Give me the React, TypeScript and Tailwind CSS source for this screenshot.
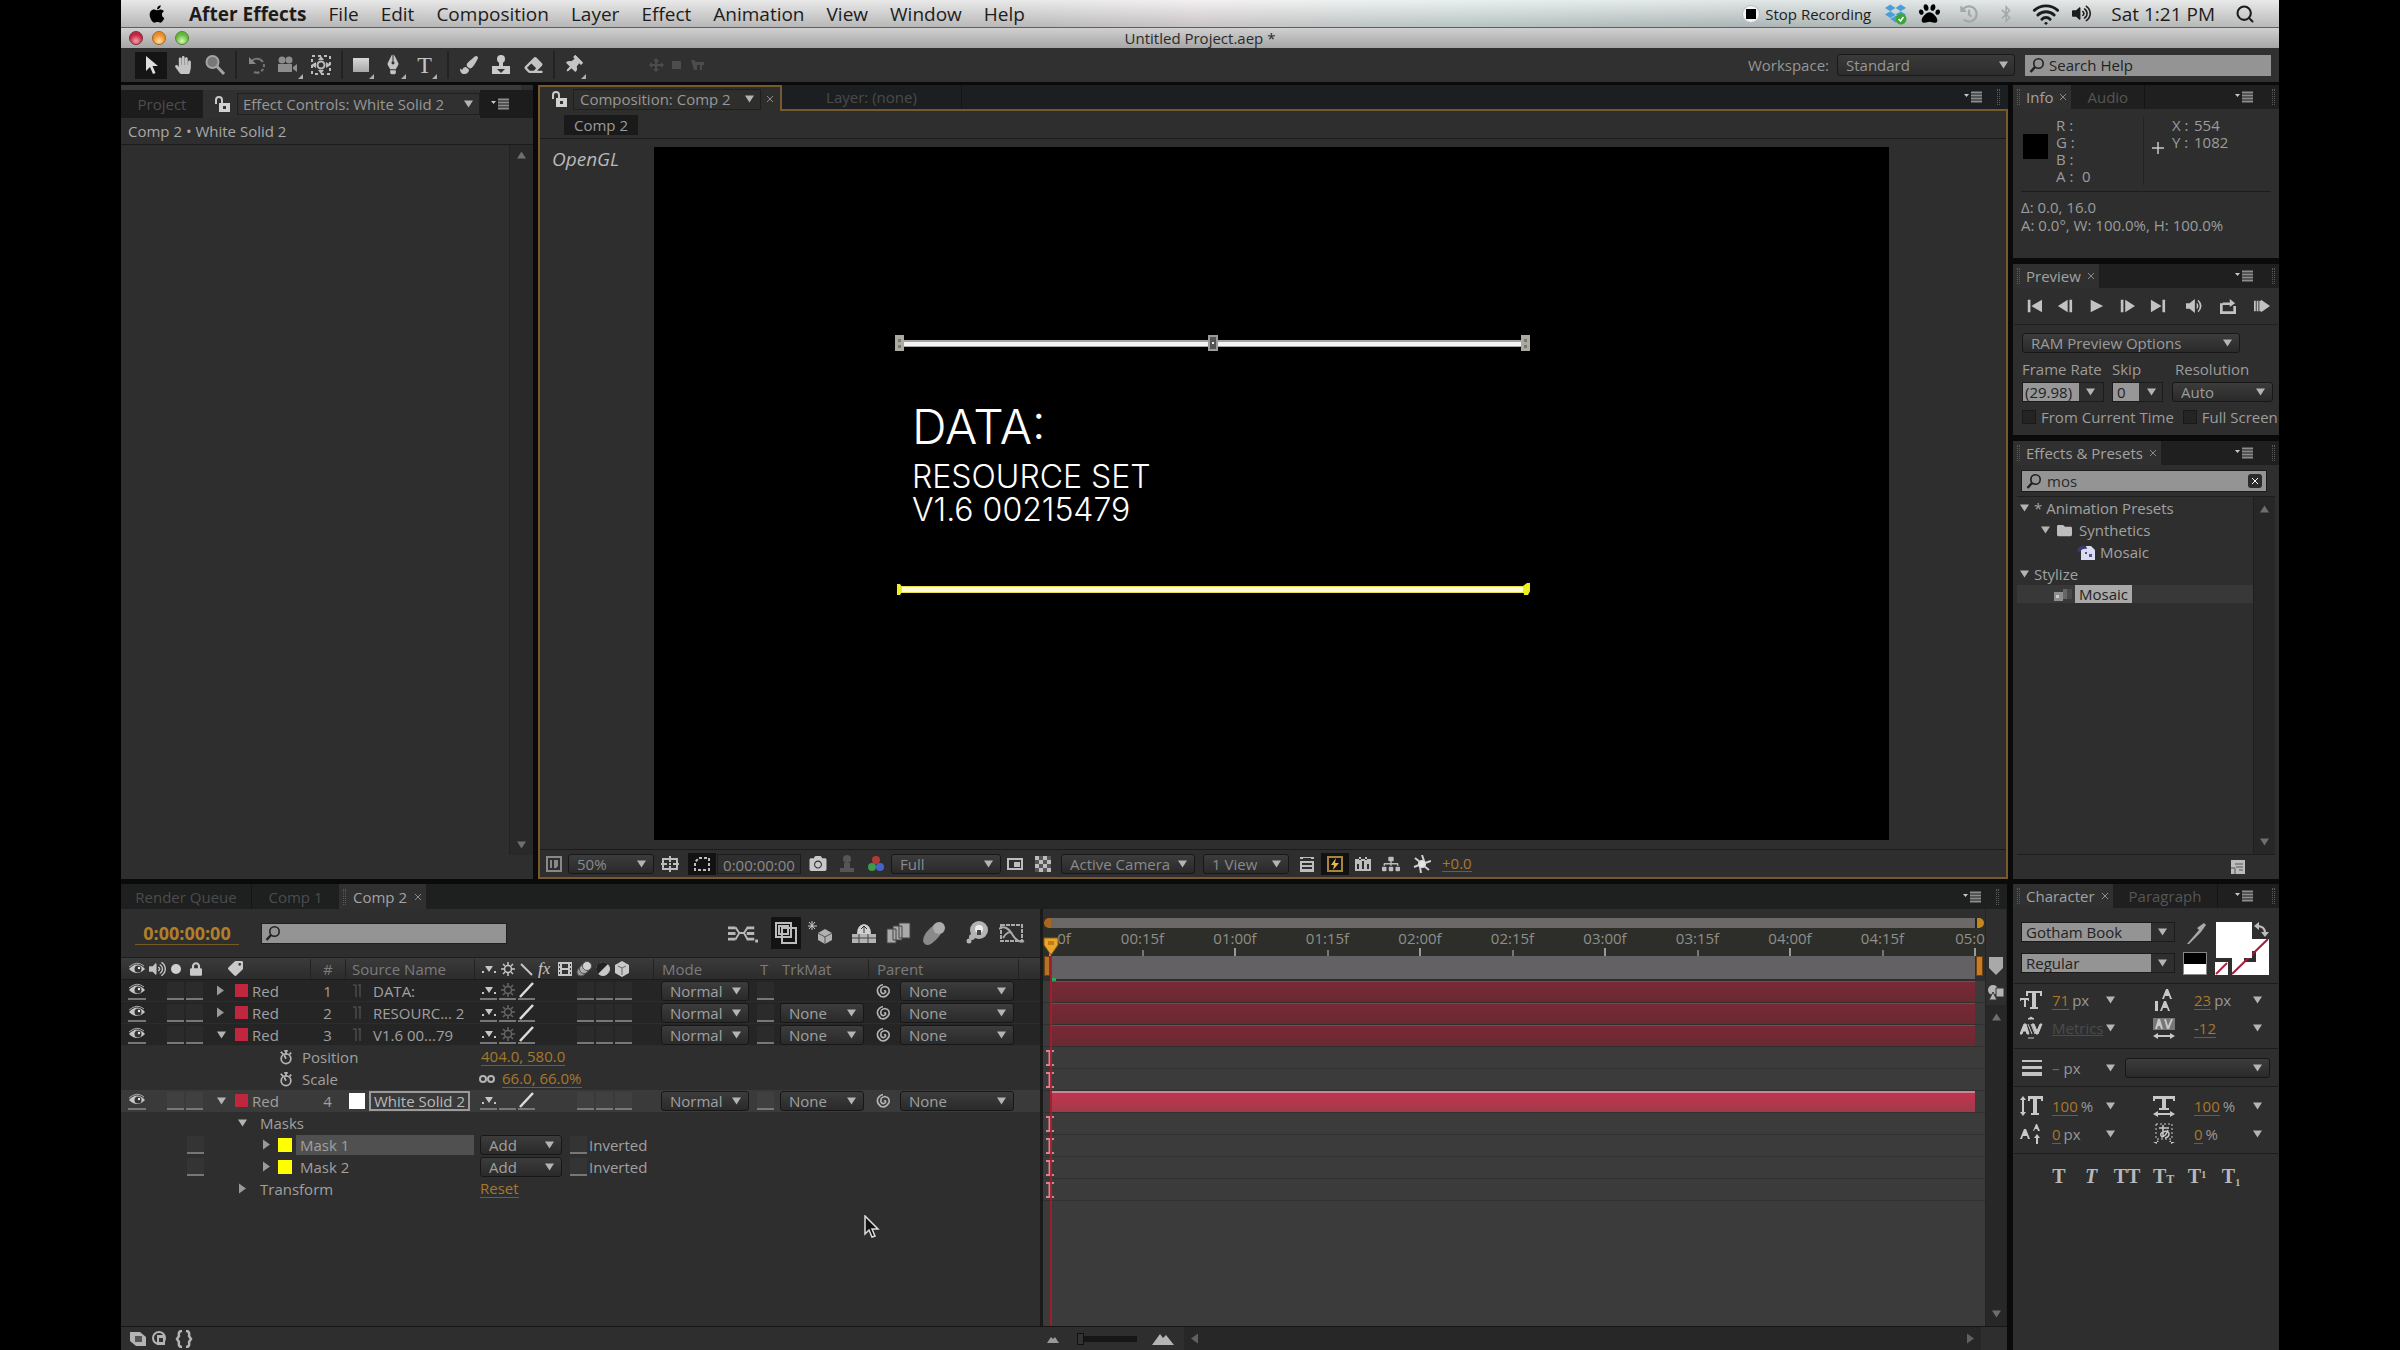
import React from 'react';
import {
  FaApple, FaBluetoothB, FaCamera, FaDropbox, FaEraser, FaFolder, FaHandPaper, FaHistory, FaLock,
  FaPaintBrush, FaPaw, FaPenNib, FaSitemap, FaTag, FaThumbtack, FaVolumeUp,
} from 'react-icons/fa';
import { Search, Wifi } from 'lucide-react';

type IconProps = { className?: string };

/* ---------- Small shared pieces ---------- */

const Down = ({ className = '' }: IconProps) => (
  <svg viewBox="0 0 10 8" className={`w-[9px] h-2 shrink-0 fill-[#b4b4b4] ${className}`}>
    <path d="M0 0h10L5 8z" />
  </svg>
);

const Right = ({ className = '' }: IconProps) => (
  <svg viewBox="0 0 8 10" className={`w-2 h-[11px] shrink-0 fill-[#9a9a9a] ${className}`}>
    <path d="M0 0v10l7-5z" />
  </svg>
);

const Close = ({ className = '' }: IconProps) => (
  <svg viewBox="0 0 8 8" className={`w-2 h-2 shrink-0 stroke-[#8a8a8a] ${className}`}>
    <path d="M1 1l6 6M7 1L1 7" />
  </svg>
);

const MenuButton = () => (
  <button aria-label="Panel menu" className="flex items-center justify-center w-10 h-full shrink-0">
    <svg viewBox="0 0 18 12" className="w-[18px] h-3">
      <path d="M0 3h5L2.500 6z" fill="#c8c8c8" />
      <path d="M7 1.500h11M7 4.500h11M7 7.500h11M7 10.500h11" stroke="#8c8c8c" strokeWidth="2" />
    </svg>
  </button>
);

const Grip = () => <span className="w-[3px] h-4 shrink-0 border-x border-dotted border-[#5a5a5a]" />;

const Magnifier = () => (
  <svg viewBox="0 0 16 16" className="w-4 h-4 shrink-0" fill="none" stroke="#222" strokeWidth="1.600">
    <circle cx="9.500" cy="6.500" r="4.700" />
    <path d="M6 10L1.500 15" strokeWidth="2.400" />
  </svg>
);

const OpenLock = () => (
  <svg viewBox="0 0 18 18" className="w-[18px] h-[18px] shrink-0">
    <path d="M3 9V5a3 3 0 0 1 6 0v4" fill="none" stroke="#c9c9c9" strokeWidth="2" />
    <path d="M6 8h11v9H6z" fill="#d2d2d2" />
    <path d="M10 11h3v3h-3z" fill="#333" />
  </svg>
);

type PickProps = { label: string; options: string[]; className?: string };

const Pick = ({ label, options, className = '' }: PickProps) => (
  <span className={`grid items-center h-5 shrink-0 rounded-[3px] border border-[#171717] bg-gradient-to-b from-[#3c3c3c] to-[#2a2a2a] ${className}`}>
    <select aria-label={label} className="col-start-1 row-start-1 w-full h-[18px] pl-2 leading-[18px] appearance-none bg-transparent outline-none">
      {options.map((o) => <option key={o}>{o}</option>)}
    </select>
    <Down className="col-start-1 row-start-1 justify-self-end mr-[7px] pointer-events-none" />
  </span>
);

type TabsProps = { active: string; others?: string[] };

const Tabs = ({ active, others = [] }: TabsProps) => (
  <div className="flex h-6 shrink-0 bg-[#1f1f1f]">
    <button className="flex items-center gap-[6px] px-1 bg-[#303030] text-[#a2a2a2] whitespace-nowrap">
      <Grip />
      {active}
      <Close />
    </button>
    {others.map((o) => (
      <button key={o} className="px-4 border-r border-[#141414] text-[#565656] whitespace-nowrap">{o}</button>
    ))}
    <div className="flex items-center gap-2 ml-auto pr-1">
      <MenuButton />
      <Grip />
    </div>
  </div>
);

/* ---------- System bars ---------- */

const menus = ['File', 'Edit', 'Composition', 'Layer', 'Effect', 'Animation', 'View', 'Window', 'Help'];

const MenuBar = () => (
  <header className="flex items-center h-7 shrink-0 pl-[26px] pr-6 border-b border-[#5d5f60] text-[19px] leading-7 text-[#1c1c1c] bg-[linear-gradient(to_bottom,#ffffff88,#77777744),linear-gradient(to_right,#cccccc,#d0d0d0_42%,#e6dfe1_50%,#cfe0de_62%,#bfcccc_75%,#d0d0d0)]">
    <FaApple className="w-5 h-5 mr-[22px] text-black" />
    <nav className="flex gap-[22px] whitespace-nowrap">
      <button className="font-bold">After Effects</button>
      {menus.map((m) => <button key={m}>{m}</button>)}
    </nav>
    <div className="flex items-center ml-auto whitespace-nowrap">
      <span className="flex items-center justify-center w-[18px] h-[18px] rounded-full bg-[#f4f4f4] border border-[#bbb]">
        <span className="w-[10px] h-[10px] bg-black" />
      </span>
      <button className="ml-[5px] text-[15px] font-medium">Stop Recording</button>
      <svg viewBox="0 0 22 22" className="w-[22px] h-[22px] ml-[14px]">
        <FaDropbox size={21} color="#4a9fd8" />
        <circle cx="16" cy="16" r="5.500" fill="#3aa63a" />
        <path d="M13.500 16l2 2 3-4" stroke="#fff" strokeWidth="1.500" fill="none" />
      </svg>
      <FaPaw className="w-[21px] h-[21px] ml-3 text-black" />
      <FaHistory className="w-[18px] h-[18px] ml-5 text-[#a3a9a9]" />
      <FaBluetoothB className="w-4 h-[18px] ml-5 text-[#a3a9a9]" />
      <Wifi className="w-7 h-7 ml-[18px]" strokeWidth={2.500} />
      <FaVolumeUp className="w-[19px] h-[19px] ml-3" />
      <span className="ml-5">Sat 1:21 PM</span>
      <Search className="w-5 h-5 ml-5" strokeWidth={2.500} />
    </div>
  </header>
);

const TitleBar = () => (
  <div className="grid grid-cols-[1fr_auto_1fr] items-center h-5 shrink-0 px-2 bg-gradient-to-b from-[#d0d0d0] to-[#a6a6a6] text-sm leading-5 text-[#2a2a2a]">
    <div className="flex gap-[9px]">
      <button aria-label="Close" className="w-[14px] h-[14px] rounded-full border border-[#7d2a35] bg-[radial-gradient(circle_at_50%_75%,#f6a0ac,#c22740_60%)]" />
      <button aria-label="Minimize" className="w-[14px] h-[14px] rounded-full border border-[#a3661c] bg-[radial-gradient(circle_at_50%_75%,#fbe1a0,#ee8b28_60%)]" />
      <button aria-label="Zoom" className="w-[14px] h-[14px] rounded-full border border-[#4c8630] bg-[radial-gradient(circle_at_50%_75%,#dcf7b8,#64b83e_60%)]" />
    </div>
    <h1 className="text-[15px]">Untitled Project.aep *</h1>
  </div>
);

/* ---------- Tool bar ---------- */

const Arrow = () => (
  <svg viewBox="0 0 16 20" className="w-4 h-5"><path d="M3 1v15l4-4 3 7 2.500-1-3-7H15z" fill="#dedede" /></svg>
);
const Zoomer = () => (
  <svg viewBox="0 0 22 22" className="w-[22px] h-[22px]" fill="#777" stroke="#a4a4a4" strokeWidth="2">
    <circle cx="8.500" cy="8" r="6" /><path d="M13 12.500l7 7.500" strokeWidth="3" />
  </svg>
);
const Rotate = () => (
  <svg viewBox="0 0 20 20" className="w-5 h-5" fill="none" stroke="#777" strokeWidth="2">
    <path d="M4 7a7 7 0 1 1 3 10" strokeDasharray="14 2 3 2 3 2" /><path d="M2 2v7h7z" fill="#888" stroke="none" />
  </svg>
);
const Cameras = () => (
  <svg viewBox="0 0 22 20" className="w-[22px] h-5" fill="#8d8d8d">
    <circle cx="6" cy="5" r="3.500" /><circle cx="13" cy="5" r="3.500" />
    <path d="M2 9h14v8H2zM17 12l4-3v8l-4-3z" />
  </svg>
);
const PanBehind = () => (
  <svg viewBox="0 0 24 22" className="w-6 h-[22px]" stroke="#bcbcbc" fill="none">
    <rect x="3" y="2" width="18" height="18" strokeDasharray="3 3" strokeWidth="2" />
    <circle cx="12" cy="11" r="3.500" strokeWidth="2" />
    <path d="M2 11l5-3v6zM22 11l-5-3v6zM12 2l3 4H9zM12 20l3-4H9z" fill="#bcbcbc" stroke="none" />
  </svg>
);
const Stamp = () => (
  <svg viewBox="0 0 20 20" className="w-5 h-5" fill="#cacaca">
    <circle cx="10" cy="4" r="4" /><path d="M8 7h4v4h7v8H1v-8h7z" /><path d="M6 14h8l-4 4z" fill="#333" />
  </svg>
);

const toolGroups = [
  [
    { name: 'Selection', icon: <Arrow />, on: true },
    { name: 'Hand', icon: <FaHandPaper className="w-[18px] h-[18px]" /> },
    { name: 'Zoom', icon: <Zoomer /> },
  ],
  [
    { name: 'Rotation', icon: <Rotate /> },
    { name: 'Camera', icon: <Cameras />, more: true },
    { name: 'Pan Behind', icon: <PanBehind /> },
  ],
  [
    { name: 'Rectangle', icon: <span className="w-4 h-[14px] bg-gradient-to-b from-[#d8d8d8] to-[#a8a8a8]" />, more: true },
    { name: 'Pen', icon: <FaPenNib className="w-4 h-[18px] rotate-135" />, more: true },
    { name: 'Type', icon: <span className="font-['Liberation_Serif'] text-2xl leading-6">T</span>, more: true },
  ],
  [
    { name: 'Brush', icon: <FaPaintBrush className="w-[18px] h-[18px]" /> },
    { name: 'Clone Stamp', icon: <Stamp /> },
    { name: 'Eraser', icon: <FaEraser className="w-[19px] h-[18px]" /> },
  ],
  [{ name: 'Puppet Pin', icon: <FaThumbtack className="w-4 h-[18px] rotate-45" />, more: true }],
];

const ToolBar = () => (
  <div className="flex items-center h-[34px] shrink-0 pl-[14px] pr-2 bg-[#303030] text-[#c4c4c4]">
    {toolGroups.map((group, i) => (
      <div key={i} className="flex items-center">
        {i > 0 && <span className="w-[2px] h-7 mx-1 bg-[#222]" />}
        {group.map((t) => (
          <button
            key={t.name}
            aria-label={t.name}
            className={`flex items-center justify-center w-8 h-[27px] ${t.on ? 'bg-[#151515]' : ''}`}
          >
            {t.icon}
            {t.more && <svg viewBox="0 0 5 5" className="w-[5px] h-[5px] self-end fill-[#b0b0b0]"><path d="M5 0v5H0z" /></svg>}
          </button>
        ))}
      </div>
    ))}
    <svg viewBox="0 0 56 14" className="w-14 h-[14px] ml-[58px]" fill="#4c4c4c">
      <path d="M7 0l3 3-2 2v1h4V4l3 3-3 3V8H8v3h2l-3 3-3-3h2V8H3v2L0 7l3-3v2h3V3H4zM23 3h9v8h-9zM42 2h3l2 2h8v3h-2v5h-2V7h-3v5h-3z" />
    </svg>
    <label htmlFor="workspace" className="ml-auto mr-2 text-[#969696]">Workspace:</label>
    <span className="grid items-center w-[178px] h-[22px] rounded-[3px] border border-[#191919] bg-gradient-to-b from-[#3a3a3a] to-[#2c2c2c] text-[#969696]">
      <select id="workspace" className="col-start-1 row-start-1 h-5 pl-2 appearance-none bg-transparent">
        <option>Standard</option>
      </select>
      <Down className="col-start-1 row-start-1 justify-self-end mr-[6px]" />
    </span>
    <label className="flex items-center gap-1 w-[246px] h-[21px] ml-[10px] px-1 bg-[#949494]">
      <Magnifier />
      <input aria-label="Search Help" placeholder="Search Help" className="w-full bg-transparent text-[#222] placeholder-[#222] outline-none" />
    </label>
  </div>
);

/* ---------- Effect controls ---------- */

const EffectControls = () => (
  <section className="flex flex-col w-[412px] shrink-0 bg-[#2e2e2e]">
    <div className="h-[5px] shrink-0 mr-3 bg-[#3a3a3a]" />
    <div className="flex h-7 shrink-0 bg-[#1c1c1c]">
      <button className="w-[82px] text-[#4e4e4e]">Project</button>
      <div className="flex items-center gap-[6px] w-[277px] pl-[10px] bg-[#303030]">
        <OpenLock />
        <span className="grid items-center flex-1 h-[22px] border border-[#1f1f1f] text-[#989898]">
          <select aria-label="Effect controls target" className="col-start-1 row-start-1 h-5 pl-[5px] appearance-none bg-transparent">
            <option>Effect Controls: White Solid 2</option>
          </select>
          <Down className="col-start-1 row-start-1 justify-self-end mr-[6px]" />
        </span>
      </div>
      <MenuButton />
    </div>
    <p className="h-[26px] pl-[7px] leading-[26px] text-[#a8a8a8]">Comp 2 • White Solid 2</p>
    <div className="flex flex-1 border-t border-[#1b1b1b]">
      <div className="flex-1" />
      <div className="flex flex-col items-center justify-between w-6 mb-6 py-[6px] bg-[#292929] border-l border-[#222]">
        <Down className="rotate-180 opacity-50" />
        <Down className="opacity-50" />
      </div>
    </div>
  </section>
);

/* ---------- Composition viewer ---------- */

const TopLine = () => (
  <svg viewBox="0 0 636 18" className="w-[636px] h-[18px]">
    <path d="M6 6h624v7H6z" fill="#a5a5a5" />
    <path d="M6 8h624v4H6z" fill="#f4f4f4" />
    <path d="M0 1h9v16H0zM626 1h9v16h-9z" fill="#aaaaa0" />
    <path d="M3 5h3v3H3zM3 11h3v3H3zM629 5h3v3h-3zM629 11h3v3h-3z" fill="#777" />
    <path d="M314 2h8v14h-8z" fill="#555" stroke="#9a9a9a" strokeWidth="2" />
    <path d="M317 8h2v2h-2z" fill="#eee" />
  </svg>
);

const BottomLine = () => (
  <svg viewBox="0 0 636 14" className="w-[636px] h-[14px]">
    <path d="M3 4h628v7H3z" fill="#e8e34a" />
    <path d="M6 5h622v5H6z" fill="#fffbd8" />
    <path d="M2 2h3l2 3v5l-2 3H2zM628 4l4-3h3v8l-2 4h-4z" fill="#eef01e" />
  </svg>
);

const ViewIcon = ({ children, name, on }: { children: React.ReactNode; name: string; on?: boolean }) => (
  <button aria-label={name} className={`flex items-center justify-center w-7 h-[22px] ${on ? 'bg-[#121212]' : ''}`}>
    <svg viewBox="0 0 18 18" className="w-[18px] h-[18px]" fill="#bdbdbd">{children}</svg>
  </button>
);

const ViewerBar = () => (
  <div className="flex items-center h-7 shrink-0 border-t border-[#1b1b1b] text-[#8a8a8a]">
    <ViewIcon name="Always preview">
      <path d="M1 1h16v16H1zM3 3v12h12V3z" fillRule="evenodd" fill="#888" />
      <path d="M5 5h2v8H5zM9 5h4v5a3 3 0 0 1-4 3z" fill="#888" />
    </ViewIcon>
    <Pick label="Magnification" options={['50%']} className="w-[86px]" />
    <div className="flex gap-1 ml-[2px]">
      <ViewIcon name="Safe areas"><path d="M1 3h16v12H1zM3 5v8h12V5z" fillRule="evenodd" /><path d="M8 1h2v6H8zM8 11h2v6H8zM0 8h6v2H0zM12 8h6v2h-6zM8 8h2v2H8z" /></ViewIcon>
      <ViewIcon name="Toggle mask" on><path d="M6 3h10v12H2V7z" fill="none" stroke="#bdbdbd" strokeWidth="2" strokeDasharray="3 2" /></ViewIcon>
    </div>
    <button className="w-[84px] h-5 ml-px border border-[#1d1d1d]">0:00:00:00</button>
    <span className="flex items-center gap-3 ml-2 mr-[6px]">
      <FaCamera className="w-[18px] h-[17px] text-[#c8c8c8]" />
      <svg viewBox="0 0 16 18" className="w-4 h-[18px]" fill="#555"><circle cx="8" cy="4" r="4" /><path d="M5 8h6v5h4v4H1v-4h4z" /></svg>
      <svg viewBox="0 0 18 18" className="w-[18px] h-[18px]">
        <circle cx="9" cy="5" r="4" fill="#b03a36" /><circle cx="5" cy="12" r="4" fill="#3d9a48" /><circle cx="13" cy="12" r="4" fill="#4664c8" />
      </svg>
    </span>
    <Pick label="Resolution" options={['Full']} className="w-[110px]" />
    <ViewIcon name="Region of interest"><path d="M1 3h16v12H1zM3 5v8h12V5zM8 7h6v5H8z" fillRule="evenodd" /></ViewIcon>
    <ViewIcon name="Transparency grid"><path d="M1 1h16v16H1z" fill="#555" /><path d="M1 1h4v4H1zM9 1h4v4H9zM5 5h4v4H5zM13 5h4v4h-4zM1 9h4v4H1zM9 9h4v4H9zM5 13h4v4H5zM13 13h4v4h-4z" /></ViewIcon>
    <Pick label="3D view" options={['Active Camera']} className="w-[134px] ml-1" />
    <Pick label="View layout" options={['1 View']} className="w-[86px] ml-2 mr-1" />
    <ViewIcon name="Pixel aspect"><path d="M2 2h3v2H2zM13 2h3v2h-3zM5 2h8v1H5zM2 6h14v11H2zM4 8v2h10V8zM4 12v2h10v-2z" fillRule="evenodd" /></ViewIcon>
    <ViewIcon name="Fast previews" on><path d="M2 2h14v14H2z" fill="none" stroke="#a8853a" strokeWidth="2" /><path d="M10 3L5 10h3l-1 5 6-7H9z" fill="#e6b84a" /></ViewIcon>
    <ViewIcon name="Timeline"><path d="M1 4h16v12H1zM3 9v5h2V9zM8 6v8h2V6zM13 9v5h2V9zM5 2h2v3H5zM11 2h2v3h-2z" fillRule="evenodd" /></ViewIcon>
    <button aria-label="Flowchart" className="flex justify-center w-7"><FaSitemap className="w-[18px] h-[18px] text-[#bdbdbd]" /></button>
    <span className="w-[3px]" />
    <ViewIcon name="Reset exposure">
      <circle cx="9" cy="9" r="4" fill="#e4e4e4" />
      <path d="M9 0l2 6M18 6l-6 2M16 15l-5-4M8 18l-1-6M1 12l5-2M2 3l5 4" stroke="#cfcfcf" strokeWidth="2" />
    </ViewIcon>
    <button className="ml-[6px] leading-4 text-[#a87a2c] border-b border-[#7a5a26]">+0.0</button>
  </div>
);

const Composition = () => (
  <section className="flex flex-col flex-1 bg-[#2e2e2e]">
    <div className="flex h-[26px] shrink-0 bg-[#1c1f21]">
      <div className="flex items-center gap-[5px] w-[244px] px-[6px] border-t-2 border-x-2 border-[#77592f] bg-[#2e2e2c] text-[#989898]">
        <span className="ml-1"><OpenLock /></span>
        <span className="grid items-center flex-1 h-[21px] border border-[#1f1f1f]">
          <select aria-label="Composition" className="col-start-1 row-start-1 h-[18px] pl-[6px] leading-[18px] appearance-none bg-transparent">
            <option>Composition: Comp 2</option>
          </select>
          <Down className="col-start-1 row-start-1 justify-self-end mr-[6px]" />
        </span>
        <Close />
      </div>
      <div className="flex flex-1 border-b-2 border-[#77592f]">
        <button className="w-[180px] border-r border-[#141414] text-[#4a4a4a]">Layer: (none)</button>
        <div className="flex items-center gap-1 ml-auto pr-2"><MenuButton /><Grip /></div>
      </div>
    </div>
    <div className="flex flex-col flex-1 border-x-2 border-b-2 border-[#77592f]">
      <div className="flex items-center h-7 shrink-0 pl-6 border-b border-[#1b1b1b]">
        <button className="w-[74px] h-5 bg-[#1a1a1a] text-[#9b9b9b] leading-5">Comp 2</button>
      </div>
      <div className="flex flex-1 pt-2 pb-[9px]">
        <div className="w-[114px] pl-3 text-[19px] leading-6 italic text-[#b8b8b8]">OpenGL</div>
        <div className="flex flex-col flex-1 pt-[187px] pl-[241px] bg-black text-white font-['Inter']">
          <TopLine />
          <p className="mt-[45px] pl-[17px] text-5xl leading-[60px] font-light">DATA:</p>
          <p className="mt-[3px] pl-[17px] text-[32px] leading-[33px] font-light">RESOURCE SET<br />V1.6 00215479</p>
          <div className="mt-14"><BottomLine /></div>
        </div>
        <div className="w-[117px]" />
      </div>
      <ViewerBar />
    </div>
  </section>
);

/* ---------- Right column ---------- */

const Info = () => (
  <section className="flex flex-col h-[173px] shrink-0 bg-[#2e2e2e] text-[#9c9c9c]">
    <Tabs active="Info" others={['Audio']} />
    <div className="flex h-[78px] pt-2 mx-2 mt-[5px] border-b border-[#1c1c1c]">
      <span className="w-[25px] h-[25px] ml-[2px] mt-3 bg-black" />
      <dl className="grid grid-cols-[26px_1fr] w-[88px] h-[68px] -mt-[5px] ml-2 leading-[17px] border-r border-[#222]">
        <dt>R :</dt><dd />
        <dt>G :</dt><dd />
        <dt>B :</dt><dd />
        <dt>A :</dt><dd>0</dd>
      </dl>
      <svg viewBox="0 0 12 12" className="w-3 h-3 ml-2 mt-5 stroke-[#c8c8c8]"><path d="M6 0v12M0 6h12" strokeWidth="1.500" /></svg>
      <dl className="grid grid-cols-[22px_1fr] h-[34px] -mt-[5px] ml-2 leading-[17px]">
        <dt>X :</dt><dd>554</dd>
        <dt>Y :</dt><dd>1082</dd>
      </dl>
    </div>
    <p className="mt-[6px] pl-2 leading-[18px] whitespace-nowrap">Δ: 0.0, 16.0<br />A: 0.0°, W: 100.0%, H: 100.0%</p>
  </section>
);

const transport = [
  { name: 'First frame', d: 'M2 2h3v14H2zM18 2v14L6 9z' },
  { name: 'Previous frame', d: 'M12 2v14L1 9zM14 2h3v14h-3z' },
  { name: 'Play', d: 'M3 2v14l14-7z' },
  { name: 'Next frame', d: 'M2 2h3v14H2zM7 2v14l11-7z' },
  { name: 'Last frame', d: 'M1 2v14l12-7zM14 2h3v14h-3z' },
  { name: 'Mute', d: 'M0 6h4l6-5v16l-6-5H0zM12 5q4 4 0 8zM14 2q7 7 0 14l-1-1q5-6 0-12z' },
  { name: 'Loop', d: 'M0 6h3v9h12V9h3v9H0zM3 5h8V1l6 5-6 4V8H3z' },
  { name: 'RAM preview', d: 'M0 3h2v12H0zM3 3h2v12H3zM6 3h2v12H6zM8 2v14l10-7z' },
];

const Transport = ({ items }: { items: typeof transport }) => (
  <>
    {items.map((t) => (
      <button key={t.name} aria-label={t.name}>
        <svg viewBox="0 0 18 18" className="w-[18px] h-4 fill-[#c2c2c2]"><path d={t.d} /></svg>
      </button>
    ))}
  </>
);

const Preview = () => (
  <section className="flex flex-col h-[171px] shrink-0 bg-[#2e2e2e] text-[#9c9c9c]">
    <Tabs active="Preview" />
    <div className="flex items-center justify-between h-9 ml-3 mr-2 shrink-0">
      <div className="flex gap-[13px]"><Transport items={transport.slice(0, 5)} /></div>
      <div className="flex gap-4"><Transport items={transport.slice(5)} /></div>
    </div>
    <div className="px-2 pt-2 mx-px border-t border-[#202020]">
      <Pick label="Preview options" options={['RAM Preview Options']} className="w-[218px]" />
    </div>
    <div className="grid grid-cols-[90px_60px_1fr] gap-y-[3px] pl-[9px] mt-[6px] leading-5">
      <label htmlFor="rate">Frame Rate</label>
      <label htmlFor="skip">Skip</label>
      <span className="pl-[3px]">Resolution</span>
      <span className="flex items-center w-[82px] h-5 pr-2 justify-between border border-[#1b1b1b]">
        <input id="rate" defaultValue="(29.98)" className="w-[56px] h-[18px] pl-[2px] bg-[#979797] text-[#222]" />
        <Down />
      </span>
      <span className="flex items-center w-[51px] h-5 pr-[6px] justify-between border border-[#1b1b1b]">
        <input id="skip" defaultValue="0" className="w-[26px] h-[18px] pl-1 bg-[#979797] text-[#222]" />
        <Down />
      </span>
      <Pick label="Preview resolution" options={['Auto']} className="w-[101px]" />
    </div>
    <div className="flex gap-[9px] pl-[9px] mt-[5px] leading-5 whitespace-nowrap">
      <label className="flex items-center gap-[5px]"><input type="checkbox" className="w-[14px] h-[14px] appearance-none bg-[#242424] border border-[#191919]" />From Current Time</label>
      <label className="flex items-center gap-[5px]"><input type="checkbox" className="w-[14px] h-[14px] appearance-none bg-[#242424] border border-[#191919]" />Full Screen</label>
    </div>
  </section>
);

const Effects = () => (
  <section className="flex flex-col flex-1 bg-[#2e2e2e] text-[#a2a2a2]">
    <Tabs active="Effects & Presets" />
    <label className="flex items-center gap-[5px] h-[22px] shrink-0 mt-[5px] ml-2 mr-3 px-1 bg-[#949494] border border-[#1c1c1c]">
      <Magnifier />
      <input aria-label="Search effects" defaultValue="mos" className="flex-1 min-w-0 bg-transparent text-[#2a2a2a] outline-none" />
      <button aria-label="Clear" className="flex items-center justify-center w-[14px] h-[14px] rounded-[3px] bg-[#2b2b2b]">
        <Close className="stroke-white" />
      </button>
    </label>
    <div className="flex flex-1 mt-1 ml-1 mr-1 border-y border-[#1e1e1e]">
      <ul className="flex-1 leading-[22px]">
        <li className="flex items-center gap-[5px] pl-[3px]"><Down />* Animation Presets</li>
        <li className="flex items-center gap-[6px] pl-6">
          <Down />
          <FaFolder className="w-[17px] h-[15px] text-[#bdbdbd]" />
          Synthetics
        </li>
        <li className="flex items-center gap-[5px] pl-[60px]">
          <svg viewBox="0 0 18 18" className="w-[18px] h-[18px]">
            <path d="M4 3h10l4 4v10H4z" fill="#dcdcf0" /><path d="M0 8q3-7 9-5l1 3Q5 5 3 9z" fill="#3a3a70" /><path d="M8 9h2v2H8zM12 11h3v3h-3z" fill="#55558c" />
          </svg>
          Mosaic
        </li>
        <li className="flex items-center gap-[5px] pl-[3px]"><Down />Stylize</li>
        <li className="flex items-center gap-[3px] pl-[37px] bg-[#383838]">
          <svg viewBox="0 0 18 14" className="w-[18px] h-[14px]">
            <path d="M0 5h9v9H0z" fill="#8e8e8e" /><path d="M9 2h4v10H9z" fill="#666" /><path d="M13 2h5v10h-5z" fill="#494949" /><path d="M2 8h3v3H2z" fill="#ccc" />
          </svg>
          <button className="h-[18px] px-1 leading-[18px] bg-[#a9a9a9] text-[#222]">Mosaic</button>
        </li>
      </ul>
      <div className="flex flex-col items-center justify-between w-[22px] py-2 bg-[#272727] border-l border-[#1f1f1f]">
        <Down className="rotate-180 opacity-50" />
        <Down className="opacity-50" />
      </div>
    </div>
    <div className="flex items-center justify-end h-6 pr-[34px] shrink-0">
      <svg viewBox="0 0 14 14" className="w-[14px] h-[14px]"><path d="M0 0h14v14H0z" fill="#bcbcbc" /><path d="M4 4h8M5 7h7M8 10h4M4 14V8H0" stroke="#555" fill="none" /></svg>
    </div>
  </section>
);

type CharValueProps = { icon: React.ReactNode; name: string; value: string; unit?: string; second?: boolean };

const CharValue = ({ icon, name, value, unit, second }: CharValueProps) => (
  <div className={`flex items-center h-7 ${second ? 'pl-[9px]' : 'pl-[6px]'}`}>
    <span className={`shrink-0 ${second ? 'w-[42px]' : 'w-8'}`}>{icon}</span>
    <button aria-label={name} className="leading-[18px] text-[#a8782c] border-b border-[#7a5a26]">{value}</button>
    {unit && <span className="ml-[3px] text-[#989898]">{unit}</span>}
    <Down className={second ? 'ml-auto mr-4' : 'ml-auto mr-7'} />
  </div>
);

const Glyph = ({ children }: { children: React.ReactNode }) => (
  <svg viewBox="0 0 24 24" className="w-6 h-6" fill="#c8c8c8" stroke="#c8c8c8" strokeWidth="0">{children}</svg>
);

const Character = () => (
  <section className="w-[266px] shrink-0 bg-[#2e2e2e]">
    <Tabs active="Character" others={['Paragraph']} />
    <div className="flex h-[76px] pt-[14px] pl-[7px] border-b border-[#1c1c1c] mx-px">
      <div className="flex flex-col gap-[11px]">
        {['Gotham Book', 'Regular'].map((font) => (
          <span key={font} className="flex items-center justify-between w-[154px] h-5 pr-[7px] border border-[#1b1b1b]">
            <input aria-label="Font" defaultValue={font} className="w-[129px] h-[18px] pl-1 bg-[#949494] text-[#222]" />
            <Down />
          </span>
        ))}
      </div>
      <svg viewBox="0 0 94 58" className="w-[94px] h-[58px] ml-2">
        <path d="M4 22L16 8l2 2L6 22zM14 6l7-5 2 2-5 7z" fill="#a9a9a9" />
        <path d="M0 30h24v23H0z" fill="#888" /><path d="M1 31h22v11H1z" /><path d="M1 42h22v10H1z" fill="#fff" />
        <path d="M49 17h37v36H49zM61 29v11h12V29z" fill="#fff" fillRule="evenodd" />
        <path d="M49 52L85 17" stroke="#a01c38" strokeWidth="2" />
        <path d="M33 0h36v36H33z" fill="#fff" />
        <path d="M32 40h13v13H32z" fill="#fff" /><path d="M33 52l11-11" stroke="#b02040" strokeWidth="2" />
        <path d="M74 4q8 0 8 7" stroke="#bdbdbd" strokeWidth="2" fill="none" /><path d="M71 4l5-4v8zM82 15l-4-5h8z" fill="#bdbdbd" />
      </svg>
    </div>
    <div className="grid grid-cols-[129px_1fr] pt-[2px] pb-[6px] mx-px border-b border-[#1c1c1c]">
      <CharValue name="Font size" value="71" unit="px" icon={<Glyph><path d="M6 3h16v5h-2V5h-4v14h2v2h-8v-2h2V5H8v3H6zM0 10h9v3H8v-1H6v7H4v-7H1v1H0z" /></Glyph>} />
      <CharValue second name="Leading" value="23" unit="px" icon={<Glyph><path d="M10 11l4-10h2l4 10h-2l-1-3h-4l-1 3zM8 23l4-10h2l4 10h-2l-1-3h-4l-1 3zM3 13h3v10H3z" /></Glyph>} />
      <div className="flex items-center h-7 pl-[6px]">
        <span className="w-8 shrink-0"><Glyph><path d="M0 18L4 8h2l3 10H7l-1-3H3l-1 3zM12 8h2l3 7 3-7h2l-4 10h-2zM8 8l4 10M11 8l4 10M8 3h6l-3-2zM8 22h6" strokeWidth="1" /></Glyph></span>
        <span className="text-[#4b4b4b] underline">Metrics</span>
        <Down className="ml-auto mr-7" />
      </div>
      <CharValue second name="Tracking" value="-12" icon={<Glyph><path d="M1 2h22v12H1z" fill="#777" /><path d="M3 13L6 3h2l3 10H9l-1-3H6l-1 3zM12 3h2l2 7 3-7h2l-4 10h-2zM1 20l5-3v2h12v-2l5 3-5 3v-2H6v2z" /></Glyph>} />
    </div>
    <div className="flex items-center h-[38px] pl-2 pr-2 mx-px border-b border-[#1c1c1c]">
      <svg viewBox="0 0 20 18" className="w-5 h-[18px] mr-[10px] fill-[#c2c2c2]"><path d="M0 1h20v2H0zM0 7h20v3H0zM0 13h20v4H0z" /></svg>
      <span className="text-[#989898]"><span className="mr-1 text-[#7a6a4a]">–</span>px</span>
      <Down className="ml-auto mr-[10px]" />
      <Pick label="Stroke style" options={['']} className="w-[145px]" />
    </div>
    <div className="grid grid-cols-[129px_1fr] py-[5px] mx-px border-b border-[#1c1c1c]">
      <CharValue name="Vertical scale" value="100" unit="%" icon={<Glyph><path d="M8 2h15v5h-2V5h-4v14h2v2h-8v-2h2V5h-3v2H8zM2 6L0 6l3-4 3 4H4v12h2l-3 4-3-4h2z" /></Glyph>} />
      <CharValue second name="Horizontal scale" value="100" unit="%" icon={<Glyph><path d="M1 2h22v5h-2V5h-7v9h3v2H7v-2h3V5H3v2H1zM1 20l5-3v2h12v-2l5 3-5 3v-2H6v2z" /></Glyph>} />
      <CharValue name="Baseline shift" value="0" unit="px" icon={<Glyph><path d="M0 17L4 7h2l4 10H8l-1-3H3l-1 3zM13 9l3-7h1l3 7h-2l-1-2h-2l-1 2zM16 22v-6h-2l3-4 3 4h-2v6z" /></Glyph>} />
      <CharValue second name="Tsume" value="0" unit="%" icon={<Glyph><path d="M4 2h16v15H4z" fill="none" strokeWidth="1" strokeDasharray="2 2" /><path d="M7 6h10M11 3v11M16 8q-2 6-6 7-3-3 1-5 6-2 6 2 0 3-4 4" fill="none" strokeWidth="1.500" /><path d="M1 20h6l-2-2v4zM23 20h-6l2-2v4z" /></Glyph>} />
    </div>
    <div className="flex items-center gap-3 h-11 pl-9 font-['Liberation_Serif'] text-xl font-bold text-[#b9b9b9]">
      <button className="w-5">T</button>
      <button className="w-5 italic">T</button>
      <button className="w-7">TT</button>
      <button className="w-5">T<span className="text-xs">T</span></button>
      <button className="w-6">T<sup className="text-[10px]">1</sup></button>
      <button className="w-5">T<sub className="text-[10px]">1</sub></button>
    </div>
  </section>
);

/* ---------- Timeline ---------- */

const Eye = () => (
  <svg viewBox="0 0 18 14" className="w-[18px] h-[14px]">
    <path d="M1 7q8-9 16 0-8 8-16 0z" fill="#c6c6c6" />
    <circle cx="10" cy="7" r="3.500" fill="#333" /><circle cx="11" cy="6" r="1.200" fill="#eee" />
    <path d="M1 5q8-7 15-1" stroke="#aaa" fill="none" />
  </svg>
);

const Stopwatch = () => (
  <svg viewBox="0 0 16 18" className="w-[14px] h-4" fill="none" stroke="#b4b4b4" strokeWidth="2">
    <circle cx="8" cy="11" r="5.500" /><path d="M6 2h4M8 2v4M2 3l3 3M8 11L6 7M14 4l-2 2" />
  </svg>
);

const Spiral = () => (
  <svg viewBox="0 0 16 16" className="w-4 h-4" fill="none" stroke="#b4b4b4" strokeWidth="1.600">
    <path d="M8 8q2-1 1.500 1.500Q7 12 5 9q-1-5 4-5.500 5 1 4 6Q10 15 5 13.500 0 10 2 5q2-3 5-3.500" />
  </svg>
);

const Switch = ({ name }: { name: string }) => (
  <input type="checkbox" aria-label={name} className="w-[17px] h-[18px] shrink-0 appearance-none bg-[#ffffff08] border-b-2 border-[#777]" />
);

const Cell = ({ children }: { children?: React.ReactNode }) => (
  <span className="flex items-center justify-center w-[17px] h-[18px] shrink-0 border-b-2 border-[#777]">{children}</span>
);

const Shy = () => <svg viewBox="0 0 16 10" className="w-4 h-[10px] fill-[#c6c6c6]"><path d="M4 2h8L8 8zM1 7h2v2H1zM13 7h2v2h-2z" /></svg>;
const Sun = ({ className = '' }: IconProps) => (
  <svg viewBox="0 0 16 16" className={`w-4 h-4 ${className}`} fill="none" stroke="#c6c6c6" strokeWidth="1.500">
    <circle cx="8" cy="8" r="3.500" /><path d="M8 1v3M8 12v3M1 8h3M12 8h3M3 3l2 2M11 11l2 2M3 13l2-2M11 5l2-2" />
  </svg>
);
const Slash = () => <svg viewBox="0 0 16 16" className="w-4 h-4"><path d="M1 15L14 1" stroke="#dcdcdc" strokeWidth="2.500" /></svg>;

type Layer = { id: number; name: string; open?: boolean; solid?: boolean; matte?: boolean };

const layers: Layer[] = [
  { id: 1, name: 'DATA:' },
  { id: 2, name: 'RESOURC... 2', matte: true },
  { id: 3, name: 'V1.6 00...79', matte: true, open: true },
  { id: 4, name: 'White Solid 2', matte: true, open: true, solid: true },
];

const LayerRow = ({ layer }: { layer: Layer }) => (
  <tr className={layer.solid ? 'bg-[#3a3a3a]' : 'bg-[#252525] border-b border-[#2c2c2c]'}>
    <td>
      <div className="flex items-center h-[21px] pl-[7px]">
        <button aria-label={`Toggle ${layer.name}`} className="flex items-center w-[18px] h-[18px] mr-[21px] border-b-2 border-[#777]"><Eye /></button>
        <Switch name="Solo" />
        <span className="w-[2px]" />
        <Switch name="Lock" />
      </div>
    </td>
    <td>
      <div className="flex items-center pl-[5px]">
        <span className="flex w-[18px]">{layer.open ? <Down /> : <Right />}</span>
        <span className="w-[13px] h-[13px] mr-1 bg-[#c1263f]" />
        Red
      </div>
    </td>
    <td className="text-center">{layer.id}</td>
    <td>
      <div className="flex items-center whitespace-nowrap">
        {layer.solid ? (
          <>
            <span className="w-4 h-4 mx-1 bg-white" />
            <button className="h-5 px-[3px] leading-4 border-2 border-[#9b9b9b] text-[#b9b9b9]">{layer.name}</button>
          </>
        ) : (
          <>
            <svg viewBox="0 0 8 14" className="w-2 h-[14px] ml-2 mr-3"><path d="M0 1h3v12M7 1v12M5 1h3" stroke="#5c5c5c" fill="none" /></svg>
            {layer.name}
          </>
        )}
      </div>
    </td>
    <td>
      <div className="flex items-center gap-[2px] pl-[6px]">
        <Cell><Shy /></Cell>
        <Cell>{!layer.solid && <Sun className="opacity-40" />}</Cell>
        <Cell><Slash /></Cell>
        <span className="w-[38px]" />
        <Switch name="Motion blur" />
        <Switch name="Adjustment" />
        <Switch name="3D" />
      </div>
    </td>
    <td><Pick label="Mode" options={['Normal']} className="w-[88px] ml-[7px]" /></td>
    <td><div className="flex pl-[5px]"><Switch name="Preserve transparency" /></div></td>
    <td>{layer.matte && <Pick label="Track matte" options={['None']} className="w-[84px] ml-1" />}</td>
    <td>
      <div className="flex items-center gap-2 pl-2">
        <Spiral />
        <Pick label="Parent" options={['None']} className="w-[114px]" />
      </div>
    </td>
  </tr>
);

const MaskRow = ({ name, selected }: { name: string; selected?: boolean }) => (
  <tr>
    <td colSpan={4}>
      <div className="flex items-center h-[22px] pl-[66px]">
        <Switch name={`Lock ${name}`} />
        <Right className="ml-[59px] mr-[7px]" />
        <span className="w-[14px] h-[14px] mr-1 bg-[#ffff00]" />
        <span className={`flex-1 h-5 pl-1 leading-5 ${selected ? 'bg-[#505050]' : ''}`}>{name}</span>
      </div>
    </td>
    <td colSpan={5}>
      <div className="flex items-center gap-1 pl-[6px]">
        <Pick label={`${name} mode`} options={['Add']} className="w-[82px] mr-1" />
        <label className="flex items-center gap-[2px]"><Switch name={`${name} inverted`} />Inverted</label>
      </div>
    </td>
  </tr>
);

const Value = ({ children }: { children: React.ReactNode }) => (
  <button className="leading-[17px] text-[#a8782c] border-b border-[#7a5a26]">{children}</button>
);

const LayerTable = () => (
  <table className="w-full table-fixed border-collapse leading-5 [&_td]:p-0 [&_th]:p-0 [&_tr]:h-[22px] text-[#a0a0a0]">
    <colgroup>
      <col className="w-[91px]" /><col className="w-[98px]" /><col className="w-[35px]" /><col className="w-[129px]" />
      <col className="w-[180px]" /><col className="w-[98px]" /><col className="w-6" /><col className="w-[92px]" /><col className="w-[172px]" />
    </colgroup>
    <thead className="bg-gradient-to-b from-[#3b3b3b] to-[#2b2b2b] text-[#7c7c7c]">
      <tr className="border-y border-[#1c1c1c] [&>th]:font-normal [&>th]:text-left">
        <th aria-label="Features">
          <div className="flex items-center pl-[7px]">
            <Eye />
            <FaVolumeUp className="w-[17px] h-4 ml-[3px] text-[#c2c2c2]" />
            <span className="w-[10px] h-[10px] ml-[5px] rounded-full bg-[#cfcfcf]" />
            <FaLock className="w-3 h-[14px] ml-[9px] text-[#c9c9c9]" />
          </div>
        </th>
        <th aria-label="Label"><FaTag className="w-[15px] h-[15px] ml-4 rotate-90 text-[#c9c9c9]" /></th>
        <th><div className="pl-3 border-l border-[#222]">#</div></th>
        <th><div className="pl-[6px] border-l border-[#222]">Source Name</div></th>
        <th aria-label="Switches">
          <div className="flex items-center gap-[3px] pl-[6px] border-x border-[#222]">
            <Shy />
            <Sun />
            <svg viewBox="0 0 16 16" className="w-4 h-4"><path d="M2 3l11 11" stroke="#c6c6c6" strokeWidth="2" /></svg>
            <span className="w-4 font-['Liberation_Serif'] italic text-[17px] text-[#c6c6c6]">fx</span>
            <svg viewBox="0 0 16 16" className="w-4 h-4"><path d="M1 1h14v14H1z" fill="#c6c6c6" /><path d="M5 3h6v4H5zM5 9h6v4H5zM2 3h1v2H2zM2 7h1v2H2zM2 11h1v2H2zM13 3h1v2h-1zM13 7h1v2h-1zM13 11h1v2h-1z" fill="#333" /></svg>
            <svg viewBox="0 0 16 16" className="w-4 h-4" stroke="#555"><circle cx="5" cy="11" r="4" fill="#999" /><circle cx="8" cy="8" r="4.500" fill="#b0b0b0" /><circle cx="11" cy="5" r="4.500" fill="#d0d0d0" /></svg>
            <svg viewBox="0 0 16 16" className="w-4 h-4"><circle cx="8" cy="8" r="6.500" fill="#c9c9c9" stroke="#c9c9c9" /><path d="M13 3A7 7 0 0 0 3 13z" fill="#222" /></svg>
            <svg viewBox="0 0 16 16" className="w-4 h-4"><path d="M8 0l7 4v8l-7 4-7-4V4z" fill="#c9c9c9" /><path d="M4 5l4 2 4-2M8 7v7" stroke="#666" fill="none" /></svg>
          </div>
        </th>
        <th><div className="pl-2">Mode</div></th>
        <th><div className="pl-2">T</div></th>
        <th><div className="pl-[6px]">TrkMat</div></th>
        <th><div className="pl-2 mr-[21px] border-x border-[#222]">Parent</div></th>
      </tr>
    </thead>
    <tbody>
      {layers.slice(0, 3).map((l) => <LayerRow key={l.id} layer={l} />)}
      <tr>
        <td colSpan={4}><div className="flex items-center gap-[9px] pl-[158px]"><Stopwatch />Position</div></td>
        <td colSpan={5}><div className="flex pl-[7px]"><Value>404.0, 580.0</Value></div></td>
      </tr>
      <tr>
        <td colSpan={4}><div className="flex items-center gap-[9px] pl-[158px]"><Stopwatch />Scale</div></td>
        <td colSpan={5}>
          <div className="flex items-center gap-[6px] pl-1">
            <svg viewBox="0 0 18 10" className="w-[18px] h-[10px]" fill="none" stroke="#b4b4b4" strokeWidth="2"><circle cx="5" cy="5" r="3" /><circle cx="13" cy="5" r="3" /></svg>
            <Value>66.0, 66.0%</Value>
          </div>
        </td>
      </tr>
      <LayerRow layer={layers[3]} />
      <tr>
        <td colSpan={4}><div className="flex items-center gap-[13px] pl-[117px]"><Down />Masks</div></td>
        <td colSpan={5} />
      </tr>
      <MaskRow name="Mask 1" selected />
      <MaskRow name="Mask 2" />
      <tr>
        <td colSpan={4}><div className="flex items-center gap-[13px] pl-[118px]"><Right />Transform</div></td>
        <td colSpan={5}><div className="flex pl-[6px]"><Value>Reset</Value></div></td>
      </tr>
    </tbody>
  </table>
);

const timelineSwitches = [
  {
    name: 'Mini-flowchart',
    box: '',
    icon: <svg viewBox="0 0 32 20" className="w-8 h-5"><path d="M0 3h8v3H0zM0 9h8v3H0zM0 15h8v3H0zM20 3h8v3h-8zM20 9h8v3h-8zM20 15h8v3h-8zM29 17h3v3h-3z" fill="#b8b8b8" /><path d="M8 4l4 6h5l4-6M8 17l4-7M17 10l4 7" fill="none" stroke="#b8b8b8" strokeWidth="2" /></svg>,
  },
  {
    name: 'Live update',
    box: 'ml-2 bg-[#131313]',
    icon: <svg viewBox="0 0 24 24" className="w-6 h-6" fill="none" stroke="#bcbcbc" strokeWidth="2"><path d="M2 2h15v14H2zM8 7h14v15H8zM5 5h9v8H5z" /></svg>,
  },
  {
    name: 'Draft 3D',
    box: '',
    icon: <svg viewBox="0 0 26 24" className="w-[26px] h-6"><path d="M4 0v9M0 5h9M1 1l6 7M7 1L1 8" stroke="#ccc" /><path d="M17 8l7 4v7l-7 4-7-4v-7z" fill="#b0b0b0" /><path d="M10 12l7 4 7-4M17 16v7" stroke="#555" fill="none" /></svg>,
  },
  {
    name: 'Hide shy layers',
    box: 'ml-2',
    icon: <svg viewBox="0 0 26 22" className="w-[26px] h-[22px]"><path d="M1 12h24v9H1z" fill="#b4b4b4" /><path d="M1 16h24M8 12v9M17 12v9" stroke="#444" /><path d="M6 12q0-9 7-10 7 1 7 10z" fill="#d0d0d0" /><path d="M13 4v7M10 7l3-3 3 3" stroke="#333" fill="none" /></svg>,
  },
  {
    name: 'Frame blending',
    box: '',
    icon: <svg viewBox="0 0 26 22" className="w-[26px] h-[22px]" stroke="#444" fill="#aaa"><path d="M1 7h9v14H1zM7 4h9v14H7zM13 1h11v15H13z" /></svg>,
  },
  {
    name: 'Motion blur',
    box: '',
    icon: <svg viewBox="0 0 26 24" className="w-[26px] h-6"><path d="M2 20q0-8 12-17 8-4 9 2-2 10-13 18-6 3-8-3z" fill="#8a8a8a" /><circle cx="18" cy="7" r="6" fill="#adadad" /></svg>,
  },
];

const TimelineTools = () => (
  <div className="flex items-center gap-[5px] text-[#bdbdbd]">
    {timelineSwitches.map((s) => (
      <button key={s.name} aria-label={s.name} className={`flex items-center justify-center w-[30px] h-8 ${s.box}`}>{s.icon}</button>
    ))}
    <button aria-label="Brainstorm" className="ml-[10px]">
      <svg viewBox="0 0 26 24" className="w-[26px] h-6"><circle cx="15" cy="9" r="9" fill="#b4b4b4" /><circle cx="5" cy="20" r="2.500" fill="#b4b4b4" /><circle cx="8" cy="16" r="3" fill="#b4b4b4" /><circle cx="15" cy="8" r="4" fill="#eee" /><path d="M13 9h4v5h-4z" fill="#444" /></svg>
    </button>
    <button aria-label="Graph editor" className="ml-1">
      <svg viewBox="0 0 26 22" className="w-[26px] h-[22px]" fill="none" stroke="#aaa" strokeWidth="2"><path d="M2 3h21v16H2z" strokeDasharray="4 1" /><path d="M0 7q7-5 13 5t12 7M4 16q5-8 9-5" /></svg>
    </button>
  </div>
);

const ticks = ['0f', '00:15f', '01:00f', '01:15f', '02:00f', '02:15f', '03:00f', '03:15f', '04:00f', '04:15f', '05:0'];
const tracks = ['layer', 'layer', 'layer', 'prop', 'prop', 'selected', 'prop', 'prop', 'prop', 'prop'];

const tickPad = (i: number) => {
  if (i === 0) return 'pl-7';
  return i === ticks.length - 1 ? 'pr-[10px]' : '';
};

const Beam = () => (
  <svg viewBox="0 0 12 18" className="w-3 h-[18px] ml-px" stroke="#e07f92" strokeWidth="3" fill="none">
    <path d="M2 2h8M2 16h8" strokeWidth="2" />
    <path d="M6 2v14" />
  </svg>
);

const Tracks = () => (
  <div className="relative flex flex-col flex-1 min-w-0 bg-[#3b3b3b]">
    <div className="h-[72px] shrink-0 pt-[9px] bg-[#2e2e2e]">
      <div className="flex h-[10px] pl-px pr-px">
        <span className="w-[7px] rounded-l-md bg-[#a8661f]" />
        <span className="flex-1 bg-[#6c6868]" />
        <span className="w-[9px] rounded-r-md border-l-2 border-[#222] bg-[#c2861f]" />
      </div>
      <div className="flex justify-between h-7 pl-[7px] pr-[10px] bg-[#2d2e29] text-[#8f8f8a] leading-5">
        {ticks.map((t, i) => (
          <div key={t} className="flex flex-col items-center justify-between w-0 whitespace-nowrap">
            <span className={tickPad(i)}>{t}</span>
            <span className={i % 2 ? 'w-[2px] h-[6px] bg-[#777]' : 'w-[2px] h-2 bg-[#999]'} />
          </div>
        ))}
      </div>
      <div className="flex h-[23px] pl-px pr-[2px]">
        <span className="w-[6px] h-5 mr-px border border-[#6a4212] bg-[#b57328]" />
        <span className="flex-1 bg-[#646164]" />
        <span className="w-[7px] h-5 ml-px border border-[#6a4212] bg-[#c97c22]" />
      </div>
    </div>
    {tracks.map((kind, i) => (
      <div key={i} className="flex items-center h-[22px] shrink-0 border-b border-[#303030]">
        {kind === 'prop' && <Beam />}
        {kind === 'layer' && <span className="flex-1 h-full ml-[7px] mr-[10px] border-t border-[#85454c] bg-gradient-to-b from-[#7a2836] to-[#682a30]" />}
        {kind === 'selected' && <span className="flex-1 h-full ml-[7px] mr-[10px] border-t-2 border-[#c98590] bg-gradient-to-b from-[#c2344f] to-[#a03a4a]" />}
      </div>
    ))}
    {/* Playhead */}
    <div className="absolute top-[27px] bottom-0 left-0 w-4 flex flex-col items-center pointer-events-none">
      <svg viewBox="0 0 16 20" className="w-4 h-5 shrink-0"><path d="M1 2h14v7l-7 10-7-10z" fill="#eaa62a" stroke="#8a5a14" /><path d="M5 5h6v4H5z" fill="#c07c18" /></svg>
      <span className="w-[2px] flex-1 bg-[#a51c2e]/90" />
    </div>
    <span className="absolute top-[69px] left-[9px] w-1 h-[3px] bg-[#1fae54]" />
  </div>
);

const Timeline = () => (
  <section className="relative flex flex-col flex-1 bg-[#2e2e2e]">
    <div className="flex h-[25px] shrink-0 bg-[#1e1f1f] text-[#4c4c4c]">
      <button className="w-[131px] border-r border-[#151515]">Render Queue</button>
      <button className="w-[87px]">Comp 1</button>
      <button className="flex items-center gap-[7px] px-1 bg-[#303030] text-[#a2a2a2]"><Grip />Comp 2<Close /></button>
      <div className="flex items-center gap-1 ml-auto pr-2"><MenuButton /><Grip /></div>
    </div>
    <div className="flex flex-1">
      <div className="w-[919px] shrink-0">
        <div className="flex items-center h-12 pl-[14px] pr-[15px]">
          <button className="w-[104px] text-lg leading-[22px] font-bold text-[#b17f2c] border-b border-[#7a5a26]">0:00:00:00</button>
          <label className="flex items-center w-[246px] h-[21px] ml-[22px] px-[3px] bg-[#949494] border border-[#1f1f1f]">
            <Magnifier />
            <input aria-label="Search layers" className="w-full bg-transparent outline-none" />
          </label>
          <div className="ml-auto"><TimelineTools /></div>
        </div>
        <LayerTable />
      </div>
      <div className="w-[3px] bg-[#1a1a1a]" />
      <Tracks />
      <div className="flex flex-col items-center w-[22px] pt-[48px] border-x border-[#242424]">
        <svg viewBox="0 0 16 18" className="w-4 h-[18px]"><path d="M1 0h14v11l-7 7-7-7z" fill="#a9a9a9" /></svg>
        <svg viewBox="0 0 18 16" className="w-[18px] h-4 mt-[10px] fill-[#b4b4b4]"><circle cx="6" cy="5" r="5" /><path d="M9 3h8v9H9zM2 15l4-8 4 8z" stroke="#333" /></svg>
        <div className="flex flex-col items-center justify-between flex-1 w-full mt-1 py-2 bg-[#272727]">
          <Down className="rotate-180 opacity-50" />
          <Down className="opacity-50" />
        </div>
      </div>
    </div>
    <div className="flex items-center h-6 shrink-0 border-t border-[#161616]">
      <div className="flex items-center w-[922px] pl-2">
        <svg viewBox="0 0 64 18" className="w-16 h-[18px]" fill="#b4b4b4">
          <path d="M1 2h10l6 5v9H7l-6-5z" /><path d="M6 6h7v6H6z" fill="#555" />
          <circle cx="30" cy="8" r="6" fill="none" stroke="#b4b4b4" strokeWidth="2" /><path d="M28 5h8v10h-8z" /><path d="M30 8h4v4h-4z" fill="#333" />
          <path d="M53 1q-4 0-3 5l-2 3 2 3q-1 5 3 5M57 1q4 0 3 5l2 3-2 3q1 5-3 5" fill="none" stroke="#b4b4b4" strokeWidth="2.500" />
        </svg>
      </div>
      <svg viewBox="0 0 12 8" className="w-3 h-2 ml-1 fill-[#999]"><path d="M0 8l4-6 2 2 2-2 4 6z" /></svg>
      <span className="flex items-center w-[60px] h-[6px] ml-[18px] bg-[#161616]"><span className="w-[7px] h-3 border border-[#111] bg-[#333]" /></span>
      <svg viewBox="0 0 22 12" className="w-[22px] h-3 ml-[15px] fill-[#b4b4b4]"><path d="M0 12L8 1l3 4 3-3 8 10z" /></svg>
      <div className="flex items-center justify-between flex-1 h-full ml-[10px] mr-[26px] px-[6px] bg-[#272727]">
        <Right className="rotate-180 opacity-50" />
        <Right className="opacity-50" />
      </div>
    </div>
    {/* Mouse pointer */}
    <svg viewBox="0 0 16 24" className="absolute left-[743px] top-[331px] w-4 h-6"><path d="M1 1v18l4-4 3 7 3-1-3-7h6z" fill="#111" stroke="#ddd" strokeWidth="1.500" /></svg>
  </section>
);

const App = () => (
  <div className="min-h-screen flex flex-col px-[5%] bg-black font-['Open_Sans','Noto_Sans',sans-serif] text-[15px] leading-5">
    <div className="flex flex-col flex-1 border-x border-black">
      <MenuBar />
      <TitleBar />
      <ToolBar />
      <main className="flex flex-col flex-1 gap-[5px] pt-[3px] bg-[#0a0a0a]">
        <div className="flex flex-1 gap-[5px]">
          <EffectControls />
          <Composition />
          <div className="flex flex-col gap-[6px] w-[266px] shrink-0">
            <Info />
            <Preview />
            <Effects />
          </div>
        </div>
        <div className="flex h-[466px] gap-[6px]">
          <Timeline />
          <Character />
        </div>
      </main>
    </div>
  </div>
);

export default App;
